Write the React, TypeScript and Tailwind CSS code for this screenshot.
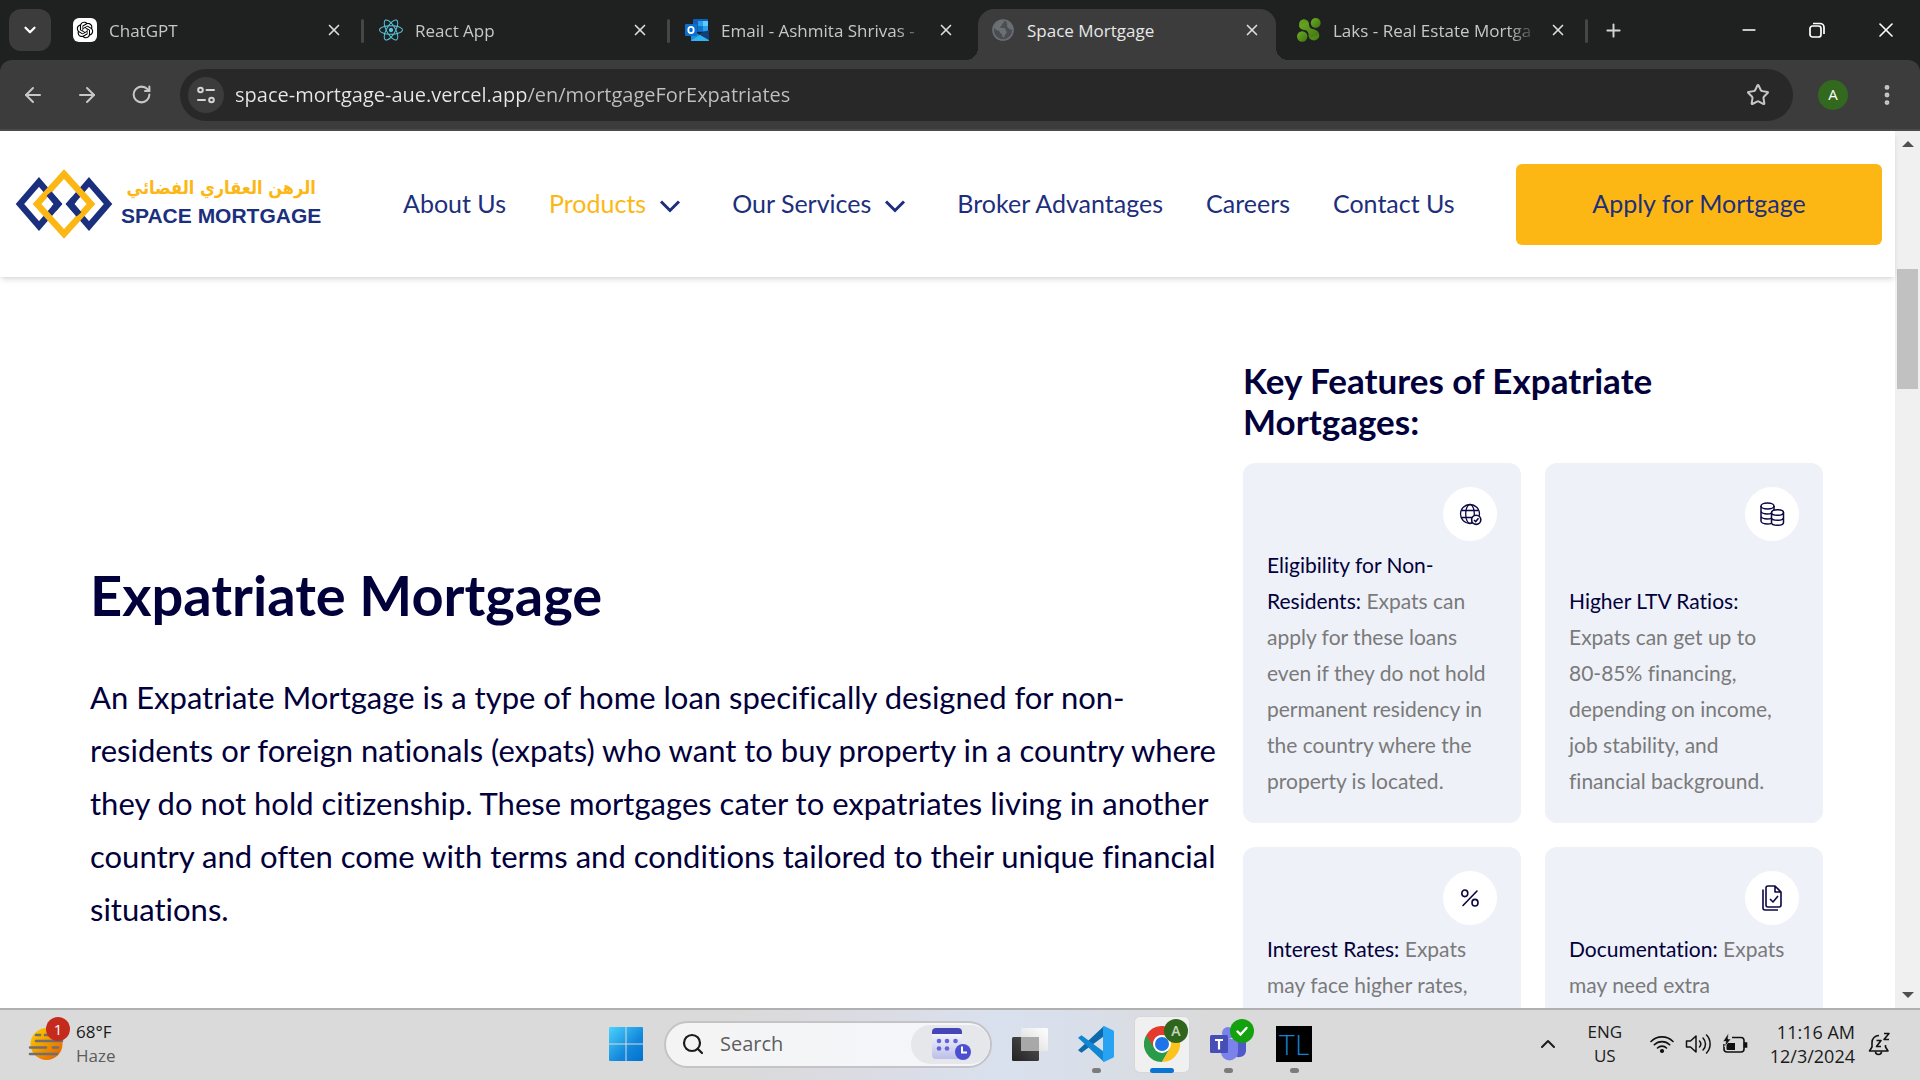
import { ReactNode } from "react";
import {
  ArrowLeft,
  ArrowRight,
  ChevronDown,
  ChevronUp,
  EllipsisVertical,
  Minus,
  Plus,
  RotateCw,
  Search,
  Star,
  X,
} from "lucide-react";
import { FaReact } from "react-icons/fa";
import { RiOpenaiFill } from "react-icons/ri";

/* ---------- Browser icons ---------- */

const ChatGptIcon = () => (
  <span className="flex size-6 items-center justify-center rounded-md bg-white text-black">
    <RiOpenaiFill size={20} />
  </span>
);

const OutlookIcon = () => (
  <svg viewBox="0 0 24 24" className="size-6" aria-hidden="true">
    <rect x="8" y="1" width="15" height="13" rx="1" fill="#0f5fb8" />
    <rect x="13" y="3" width="5" height="5" fill="#2aa0ea" />
    <rect x="18" y="3" width="5" height="5" fill="#5ccbfa" />
    <rect x="13" y="8" width="5" height="5" fill="#1172c9" />
    <rect x="18" y="8" width="5" height="5" fill="#2aa0ea" />
    <path d="M6 12l9 5 9-5v10a1 1 0 0 1-1 1H7a1 1 0 0 1-1-1z" fill="#1b8fe0" />
    <path d="M24 12v10L13 16z" fill="#123f75" />
    <path d="M6 22.500L15 17l9 5.500a1 1 0 0 1-1 .5H7a1 1 0 0 1-1-.5z" fill="#34b4f2" />
    <rect x="0" y="6" width="12" height="12" rx="1" fill="#0a6fd0" />
    <ellipse cx="6" cy="12" rx="2.700" ry="3.100" fill="none" stroke="#fff" strokeWidth="1.800" />
  </svg>
);

const GlobeTabIcon = () => (
  <svg viewBox="0 0 24 24" className="size-6" aria-hidden="true">
    <circle cx="12" cy="12" r="10" fill="#4a4e52" stroke="#6b7075" strokeWidth="1.600" />
    <path d="M3 9c2-4 5-6.500 9-6.500 1.500 1 1 2.500-.500 3-1 .5 0 2-1.500 2.500-1.500.5-1 1.500 0 2h3c1.500 0 2 1.500 1.500 3 2 0 1.500 2 0 3-1 1-.5 3-2.500 3.500-1-1.500-.5-3-2-4s-1-2.500-3-3-3.500-1.500-4-3.500z" fill="#6b7075" />
    <path d="M16 3.500c3 1.300 5 4 5.500 7.500-1.500 1-3 .5-3.500-.5s-2-1-2-2.500 1-2-.500-3z" fill="#6b7075" />
  </svg>
);

const LaksIcon = () => (
  <svg viewBox="0 0 24 24" className="size-6" aria-hidden="true">
    <defs>
      <linearGradient id="laks" x1="0" y1="0" x2="1" y2="1">
        <stop offset="0" stopColor="#6fae25" />
        <stop offset="1" stopColor="#3f7410" />
      </linearGradient>
    </defs>
    <g fill="url(#laks)">
      <ellipse cx="7" cy="6.500" rx="5" ry="5.300" />
      <circle cx="18.700" cy="5" r="4.900" />
      <circle cx="5.200" cy="18.500" r="5.200" />
      <ellipse cx="17" cy="17.500" rx="5.300" ry="5" />
      <path d="M10.500 3c2 3 1 5.500 3.500 7.500 4 1 7.500 2 8 6l-9.500 4c-1-4-.5-5.500-3-8C6 11.500 3 11 2 8z" />
    </g>
  </svg>
);

const RestoreIcon = () => (
  <svg viewBox="0 0 16 16" className="size-4" fill="none" stroke="#fff" strokeWidth="1.700" aria-hidden="true">
    <rect x="1" y="4" width="11" height="11" rx="2.500" />
    <path d="M4 1.500h7a4 4 0 0 1 4 4V12" />
  </svg>
);

const TuneIcon = () => (
  <svg viewBox="0 0 20 20" className="size-5" fill="none" stroke="#d5d5d5" strokeWidth="2" strokeLinecap="round" aria-hidden="true">
    <circle cx="4.500" cy="5" r="2.300" />
    <path d="M10.500 5H18M2 15h7" />
    <circle cx="15.500" cy="15" r="2.300" />
  </svg>
);

/* ---------- Browser window ---------- */

type TabInfo = { title: string; icon: ReactNode; active?: boolean; divider?: boolean };

const tabs: TabInfo[] = [
  { title: "ChatGPT", icon: <ChatGptIcon />, divider: true },
  { title: "React App", icon: <FaReact size={24} color="#58c4dc" />, divider: true },
  { title: "Email - Ashmita Shrivas -", icon: <OutlookIcon /> },
  { title: "Space Mortgage", icon: <GlobeTabIcon />, active: true },
  { title: "Laks - Real Estate Mortga", icon: <LaksIcon />, divider: true },
];

function Tab({ title, icon, active, divider }: TabInfo) {
  return (
    <div className="relative h-full w-[306px] shrink pt-[9px]">
      {active && (
        <>
          <span className="absolute bottom-0 left-[-10px] size-3 bg-[radial-gradient(circle_at_0_0,transparent_12px,#3c3c3c_12px)]" />
          <span className="absolute right-[-6px] bottom-0 size-3 bg-[radial-gradient(circle_at_100%_0,transparent_12px,#3c3c3c_12px)]" />
        </>
      )}
      <div className={active ? "mr-[6px] ml-[2px] flex h-full items-center rounded-t-2xl bg-[#3c3c3c] pr-[12px] pb-[9px] pl-[13px]" : "flex h-full items-center pr-[18px] pb-[9px] pl-[15px]"}>
        <button type="button" className="flex min-w-0 flex-1 items-center gap-3">
          <span className="shrink-0">{icon}</span>
          <span className={active ? "overflow-hidden pt-[2px] text-[17px] whitespace-nowrap text-[#e8e8e8]" : "overflow-hidden pt-[2px] text-[17px] whitespace-nowrap text-[#c7c7c7] [mask-image:linear-gradient(to_right,#000_175px,transparent_205px)]"}>
            {title}
          </span>
        </button>
        <button type="button" aria-label={`Close ${title}`} className="ml-2 flex size-6 items-center justify-center text-[#dcdcdc]">
          <X size={18} strokeWidth={2.2} />
        </button>
      </div>
      {divider && <span className="absolute top-[19px] right-0 h-6 w-[3px] rounded bg-[#444746]" />}
    </div>
  );
}

function Browser() {
  return (
    <div className="shrink-0 bg-[#1f2120] font-['Open_Sans',sans-serif]">
      <div className="flex h-[60px] items-center">
        <button type="button" aria-label="Search tabs" className="ml-[9px] flex size-[42px] shrink-0 items-center justify-center rounded-xl bg-[#3c3c3c] text-white">
          <ChevronDown size={18} strokeWidth={3} />
        </button>
        <div className="ml-[7px] flex h-full min-w-0 flex-1">
          {tabs.map((t) => (
            <Tab key={t.title} {...t} />
          ))}
          <button type="button" aria-label="New tab" className="ml-[13px] flex h-full w-6 items-center justify-center text-[#d5d5d5]">
            <Plus size={21} strokeWidth={2.2} />
          </button>
        </div>
        <div className="flex h-full shrink-0 text-white">
          <button type="button" aria-label="Minimize" className="flex w-[69px] items-center justify-center"><Minus size={20} /></button>
          <button type="button" aria-label="Restore" className="flex w-[68px] items-center justify-center"><RestoreIcon /></button>
          <button type="button" aria-label="Close" className="flex w-[69px] items-center justify-center"><X size={24} strokeWidth={1.6} /></button>
        </div>
      </div>
      <div className="flex h-[71px] items-center rounded-t-xl border-b-2 border-[#4a4a4a] bg-[#3c3c3c] text-[#c7c7c7]">
        <button type="button" aria-label="Back" className="ml-[6px] flex w-[54px] justify-center"><ArrowLeft size={24} /></button>
        <button type="button" aria-label="Forward" className="flex w-[54px] justify-center"><ArrowRight size={24} /></button>
        <button type="button" aria-label="Reload" className="flex w-[54px] justify-center"><RotateCw size={21} strokeWidth={2.3} /></button>
        <div className="ml-3 flex h-[52px] flex-1 items-center rounded-full bg-[#282828] pr-[23px] pl-2">
          <button type="button" aria-label="View site information" className="flex size-9 items-center justify-center rounded-full bg-[#3c3c3c]">
            <TuneIcon />
          </button>
          <input
            type="text"
            aria-label="Address"
            defaultValue="space-mortgage-aue.vercel.app/en/mortgageForExpatriates"
            className="ml-[11px] flex-1 bg-[linear-gradient(to_right,#e8e8e8_293px,#c0c0c0_293px)] bg-clip-text text-[20px] text-transparent outline-none"
          />
          <button type="button" aria-label="Bookmark this tab"><Star size={24} /></button>
        </div>
        <button type="button" aria-label="Profile" className="ml-[25px] flex size-[30px] items-center justify-center rounded-full bg-[#33691e] text-[15px] text-white">A</button>
        <button type="button" aria-label="Browser menu" className="mr-[20px] ml-[26px]"><EllipsisVertical size={26} strokeWidth={2.5} /></button>
      </div>
    </div>
  );
}

/* ---------- Site ---------- */

function Logo() {
  return (
    <a href="#home" className="ml-[15px] flex w-[310px] shrink-0 items-center gap-2">
      <svg viewBox="0 0 98 72" className="h-[72px] w-[98px] shrink-0" fill="none" strokeWidth="6.500" aria-hidden="true">
        <path d="M24 14L43 36 24 58 5 36z" stroke="#1a2f7e" />
        <path d="M74 14L93 36 74 58 55 36z" stroke="#1a2f7e" />
        <path d="M49 6L76 36 49 66 22 36z" stroke="#fdb714" />
        <path d="M34 25.600L43 36 39 40.600" stroke="#1a2f7e" />
        <path d="M59 31.400L55 36 64 46.400" stroke="#1a2f7e" />
      </svg>
      <span className="flex flex-col items-center pb-2 whitespace-nowrap">
        <span lang="ar" dir="rtl" className="font-['DejaVu_Sans_Condensed','DejaVu_Sans',sans-serif] text-[18px] leading-8 font-bold text-[#fdb714]">الرهن العقاري الفضائي</span>
        <span className="font-['Liberation_Sans',Arial,sans-serif] text-[21px] leading-6 font-bold text-[#1a2f7e]">SPACE MORTGAGE</span>
      </span>
    </a>
  );
}

const links = [
  { label: "About Us" },
  { label: "Products", menu: true, current: true },
  { label: "Our Services", menu: true },
  { label: "Broker Advantages" },
  { label: "Careers" },
  { label: "Contact Us" },
];

function SiteHeader() {
  return (
    <header className="relative flex h-[146px] shrink-0 items-center bg-white shadow-md shadow-black/10">
      <Logo />
      <nav className="ml-[78px] flex gap-[43px] text-[25px] whitespace-nowrap text-[#1d2f7c]">
        {links.map((l) => (
          <a key={l.label} href="#nav" className={l.menu ? "flex items-center gap-3 pr-[7px]" : "flex items-center"}>
            <span className={l.current ? "text-[#fdb714]" : ""}>{l.label}</span>
            {l.menu && (
              <svg viewBox="0 0 24 24" className="mt-1 size-6" fill="none" stroke="#1d2f7c" strokeWidth="3" aria-hidden="true">
                <path d="M3 7.500l9 9 9-9" />
              </svg>
            )}
          </a>
        ))}
      </nav>
      <a href="#apply" className="mr-[13px] ml-auto flex h-[81px] w-[366px] items-center justify-center rounded-md bg-[#fdb714] text-[25px] text-[#1d2f7c]">
        Apply for Mortgage
      </a>
    </header>
  );
}

const GlobeCheck = () => (
  <svg viewBox="0 0 24 24" className="size-6" fill="none" stroke="#0b0741" strokeWidth="1.300" aria-hidden="true">
    <circle cx="12" cy="12" r="9.500" />
    <ellipse cx="12" cy="12" rx="4.300" ry="9.500" />
    <path d="M3.500 8.500h17M3.500 15.500H15" />
    <circle cx="18.200" cy="17.800" r="4.600" fill="#fff" strokeWidth="1.600" />
    <path d="M16 18l1.700 1.600 2.800-3.400" strokeWidth="1.500" />
  </svg>
);

const Coins = () => (
  <svg viewBox="0 0 26 26" className="size-[26px]" fill="none" stroke="#0b0741" strokeWidth="1.500" aria-hidden="true">
    <ellipse cx="8.500" cy="5" rx="6.500" ry="3" />
    <path d="M2 5v15c0 1.700 3 3 6.500 3 1.600 0 3-.2 4-.7M15 5v4M2 10c0 1.700 3 3 6.500 3 1.500 0 2.800-.2 3.800-.6M2 15c0 1.700 3 3 6.500 3 1.500 0 2.800-.2 3.800-.6" />
    <ellipse cx="18.500" cy="11.500" rx="6" ry="2.800" />
    <path d="M12.500 11.500v10c0 1.600 2.700 2.800 6 2.800s6-1.200 6-2.800v-10M12.500 16.500c0 1.600 2.700 2.800 6 2.800s6-1.200 6-2.800" />
  </svg>
);

const Percent = () => (
  <svg viewBox="0 0 20 20" className="size-5" fill="none" stroke="#0b0741" strokeWidth="1.600" strokeLinecap="round" aria-hidden="true">
    <ellipse cx="4.800" cy="5.300" rx="3" ry="3.300" />
    <ellipse cx="15" cy="14.700" rx="3" ry="3.300" />
    <path d="M17 3L3 17.500" />
  </svg>
);

const DocCheck = () => (
  <svg viewBox="0 0 26 26" className="size-[26px]" fill="none" stroke="#0b0741" strokeWidth="1.600" strokeLinejoin="round" aria-hidden="true">
    <path d="M9 1h7l6 6v13a2 2 0 0 1-2 2H9a2 2 0 0 1-2-2V3a2 2 0 0 1 2-2zM16 1v6h6" />
    <path d="M4 4.500V23a2 2 0 0 0 2 2h13" />
    <path d="M11 14l3 3 5-6" />
  </svg>
);

const features: { title: string; text: ReactNode; icon: ReactNode }[] = [
  { title: "Eligibility for Non-Residents:", text: "Expats can apply for these loans even if they do not hold permanent residency in the country where the property is located.", icon: <GlobeCheck /> },
  {
    title: "Higher LTV Ratios:",
    text: <>Expats can get up to <span className="whitespace-nowrap">80-85%</span> financing, depending on income, job stability, and financial background.</>,
    icon: <Coins />,
  },
  { title: "Interest Rates:", text: "Expats may face higher rates,", icon: <Percent /> },
  { title: "Documentation:", text: "Expats may need extra", icon: <DocCheck /> },
];

function SiteContent() {
  return (
    <main className="grid min-h-0 flex-1 grid-cols-[minmax(0,1fr)_580px] gap-6 overflow-hidden pt-[83px] pr-[72px] pl-[90px] text-[#02003b]">
      <section className="pt-[200px]">
        <h1 className="text-[56px] leading-[70px] font-bold">Expatriate Mortgage</h1>
        <p className="mt-[41px] text-[31px] leading-[53px]">
          An Expatriate Mortgage is a type of home loan specifically designed for non-residents or foreign nationals (expats) who want to buy property in a country where they do not hold citizenship. These mortgages cater to expatriates living in another country and often come with terms and conditions tailored to their unique financial situations.
        </p>
      </section>
      <section>
        <h2 className="w-[440px] text-[35px] leading-[41px] font-bold">Key Features of Expatriate Mortgages:</h2>
        <div className="mt-[21px] grid grid-cols-2 gap-6">
          {features.map((f) => (
            <article key={f.title} className="flex flex-col justify-between gap-[6px] rounded-xl bg-[#eef1f8] p-6">
              <span className="flex size-[54px] items-center justify-center self-end rounded-full bg-white">{f.icon}</span>
              <p className="text-[21px] leading-9 text-[#7a7a7a]">
                <span className="text-[#02003b]">{f.title}</span> {f.text}
              </p>
            </article>
          ))}
        </div>
      </section>
    </main>
  );
}

function Scrollbar() {
  return (
    <div aria-hidden="true" className="flex w-[25px] shrink-0 flex-col items-center bg-[#f0f0f0] py-[10px]">
      <span className="size-0 border-x-6 border-b-6 border-x-transparent border-b-[#505050]" />
      <span className="mt-[122px] h-[120px] w-[21px] bg-[#c1c1c1]" />
      <span className="mt-auto size-0 border-x-6 border-t-6 border-x-transparent border-t-[#505050]" />
    </div>
  );
}

/* ---------- Taskbar ---------- */

const HazeIcon = () => (
  <svg viewBox="0 0 36 34" className="h-[34px] w-9" aria-hidden="true">
    <defs>
      <linearGradient id="sun" x1="0" y1="0" x2="1" y2="1">
        <stop offset="0" stopColor="#ffd200" />
        <stop offset="1" stopColor="#e25a00" />
      </linearGradient>
    </defs>
    <circle cx="18.500" cy="17" r="16" fill="url(#sun)" />
    <path d="M8 8h4M17 8h6M8 14h26M2 20.500h16M25 20.500h5M2 27h27" stroke="#6f6f6f" strokeWidth="2.600" strokeLinecap="round" />
  </svg>
);

const WindowsIcon = () => (
  <svg viewBox="0 0 36 36" className="size-9" aria-hidden="true">
    <defs>
      <linearGradient id="win" gradientUnits="userSpaceOnUse" x1="0" y1="0" x2="36" y2="36">
        <stop offset="0" stopColor="#4fd6ff" />
        <stop offset="0.600" stopColor="#1288dc" />
        <stop offset="1" stopColor="#006fcf" />
      </linearGradient>
    </defs>
    <path d="M1 2a1 1 0 0 1 1-1h15.500v16.500H1zM18.500 1H34a1 1 0 0 1 1 1v15.500H18.500zM1 18.500h16.500V35H2a1 1 0 0 1-1-1zM18.500 18.500H35V34a1 1 0 0 1-1 1H18.500z" fill="url(#win)" />
  </svg>
);

const CalendarIcon = () => (
  <svg viewBox="0 0 40 34" className="h-[34px] w-10" aria-hidden="true">
    <defs>
      <linearGradient id="cal" x1="0" y1="0" x2="0" y2="1">
        <stop offset="0" stopColor="#fff" />
        <stop offset="1" stopColor="#bcbfe8" />
      </linearGradient>
    </defs>
    <rect x="1" y="1" width="30" height="31" rx="4" fill="url(#cal)" />
    <path d="M1 7V5a4 4 0 0 1 4-4h22a4 4 0 0 1 4 4v2z" fill="#4547b8" />
    <g fill="#6264da">
      <circle cx="8" cy="14" r="2.300" /><circle cx="16" cy="14" r="2.300" /><circle cx="24.500" cy="14" r="2.300" />
      <circle cx="8" cy="21.500" r="2.300" /><circle cx="16" cy="21.500" r="2.300" />
    </g>
    <circle cx="32" cy="25" r="8" fill="#4c50cf" />
    <path d="M31 19.500v6h5" fill="none" stroke="#fff" strokeWidth="2" />
  </svg>
);

const TaskViewIcon = () => (
  <svg viewBox="0 0 36 36" className="size-9" aria-hidden="true">
    <defs>
      <linearGradient id="tvd" x1="1" y1="0" x2="0" y2="1"><stop offset="0" stopColor="#555" /><stop offset="1" stopColor="#222" /></linearGradient>
      <linearGradient id="tvl" x1="1" y1="0" x2="0" y2="1"><stop offset="0" stopColor="#fff" /><stop offset="1" stopColor="#d8d8d8" /></linearGradient>
    </defs>
    <rect x="0" y="11" width="27" height="24" rx="1.500" fill="url(#tvd)" />
    <rect x="9" y="2" width="27" height="23" rx="1.500" fill="url(#tvl)" />
    <path d="M9 11h18v14H10.500A1.500 1.500 0 0 1 9 23.500z" fill="#a8a8a8" />
  </svg>
);

const VsCodeIcon = () => (
  <svg viewBox="0 0 36 36" className="size-9" aria-hidden="true">
    <path d="M0 24.200L26 0l1.500 9L3.500 26.800z" fill="#0b69ac" />
    <path d="M0 11.800l3.500-2.600L27.500 27 26 36z" fill="#1187d3" />
    <path d="M26 0l9 4.200a2 2 0 0 1 1 1.800v24a2 2 0 0 1-1 1.800L26 36c-.8-.2-1-1-1-2V2c0-1 .2-1.800 1-2z" fill="#27a3f1" />
  </svg>
);

const ChromeIcon = () => (
  <svg viewBox="0 0 36 36" className="size-9" aria-hidden="true">
    <path d="M18 18L2.400 9A18 18 0 0 0 18 36l7.800-13.500z" fill="#2a9b48" />
    <path d="M18 9h15.600A18 18 0 0 1 18 36l7.800-13.500z" fill="#fcc31e" />
    <path d="M2.400 9A18 18 0 0 1 33.600 9H18a9 9 0 0 0-7.800 13.500z" fill="#e33b2e" />
    <circle cx="18" cy="18" r="9" fill="#fff" />
    <circle cx="18" cy="18" r="7" fill="#1e73e8" />
  </svg>
);

const TeamsIcon = () => (
  <svg viewBox="0 0 36 36" className="size-9" aria-hidden="true">
    <circle cx="18" cy="7" r="6" fill="#7b83eb" />
    <path d="M24 13h12v12a7 7 0 0 1-12 4z" fill="#5059c9" />
    <path d="M11 13h17v13a8.500 8.500 0 0 1-17 0z" fill="#7b83eb" />
    <rect x="0" y="9" width="18" height="18" rx="1.500" fill="#464eb8" />
    <path d="M5 14h8M9 14v9.500" stroke="#fff" strokeWidth="2.200" />
  </svg>
);

const WifiIcon = () => (
  <svg viewBox="0 0 24 20" className="h-5 w-6" fill="none" stroke="#111" strokeWidth="1.600" strokeLinecap="round" aria-hidden="true">
    <path d="M1 7.500a15.500 15.500 0 0 1 22 0M4.300 10.800a10.900 10.900 0 0 1 15.400 0M7.500 14a6.400 6.400 0 0 1 9 0" />
    <circle cx="12" cy="17" r="1.300" fill="#111" />
  </svg>
);

const SpeakerIcon = () => (
  <svg viewBox="0 0 26 22" className="h-[22px] w-[26px]" fill="none" stroke="#111" strokeWidth="1.500" strokeLinejoin="round" strokeLinecap="round" aria-hidden="true">
    <path d="M1.500 8v6h4l5.500 5V3L5.500 8z" />
    <path d="M14.500 8a4.500 4.500 0 0 1 0 6M18 5a8.500 8.500 0 0 1 0 12M21.500 2a13 13 0 0 1 0 18" />
  </svg>
);

const BatteryIcon = () => (
  <svg viewBox="0 0 26 22" className="h-[22px] w-[26px]" fill="none" stroke="#111" strokeWidth="1.600" aria-hidden="true">
    <path d="M10 4.500h9a3 3 0 0 1 3 3V16a3 3 0 0 1-3 3H5a3 3 0 0 1-3-3v-5" />
    <path d="M22.500 10h2v4h-2z" fill="#111" />
    <path d="M4.500 10h8.500v7H5.500a1 1 0 0 1-1-1z" fill="#111" stroke="none" />
    <path d="M6.500 0L1 8.500h3L2.500 14 9 6H6z" fill="#111" stroke="#dadada" strokeWidth="0.600" />
  </svg>
);

const BellIcon = () => (
  <svg viewBox="0 0 24 24" className="size-6" fill="none" stroke="#111" strokeWidth="1.600" strokeLinejoin="round" aria-hidden="true">
    <path d="M12 3.500c-4 0-7 3-7 7V15l-2.500 4h18.500L18.500 15v-2" />
    <path d="M8.500 19.500c0 4 6 4 6 0" />
    <path d="M9.500 8.500H14l-4.500 6H14M17 1.500h5l-5 6h5" />
  </svg>
);

function TaskButton({ label, children, state }: { label: string; children: ReactNode; state?: "open" | "focused" }) {
  return (
    <button type="button" aria-label={label} className="relative flex h-full w-[66px] items-center justify-center">
      {state === "focused" && <span className="absolute inset-x-[5px] top-[6px] bottom-[5px] rounded-md border border-black/10 bg-[#f0f0f0]" />}
      <span className="relative">{children}</span>
      {state === "open" && <span className="absolute bottom-[5px] h-[5px] w-[9px] rounded-full bg-[#7c7c7c]" />}
      {state === "focused" && <span className="absolute bottom-[5px] h-[5px] w-6 rounded-full bg-[#0b74d1]" />}
    </button>
  );
}

function Taskbar() {
  return (
    <footer className="grid h-[72px] shrink-0 grid-cols-[1fr_auto_1fr] items-center border-t-2 border-[#b0b0b0] bg-[#dadada] bg-[linear-gradient(to_right,#dadada_38%,#dbdbe3_45%,#d9e1ee_52%,#d9dfea_56%,#dadada_63%)] pb-[2px] font-['Open_Sans',sans-serif] text-[17px] leading-6 text-[#1b1b1b]">
      <button type="button" className="ml-7 flex items-center gap-3 justify-self-start text-left">
        <span className="relative">
          <HazeIcon />
          <span className="absolute top-[-10px] right-[-6px] flex size-6 items-center justify-center rounded-full bg-[#c42b1c] text-[15px] text-white">1</span>
        </span>
        <span>
          <span className="block">68°F</span>
          <span className="block text-[#5c5c5c]">Haze</span>
        </span>
      </button>
      <div className="flex h-full items-center">
        <TaskButton label="Start"><WindowsIcon /></TaskButton>
        <div className="mx-[5px] flex h-[47px] w-[328px] items-center rounded-full border-2 border-[#c3c3c8] bg-[linear-gradient(to_right,#f4f4f4,#f4f6fb)] pl-[15px]">
          <Search size={24} strokeWidth={2.2} />
          <input type="text" aria-label="Search" placeholder="Search" className="ml-[15px] w-0 flex-1 text-[20px] outline-none placeholder:text-[#5e5e5e]" />
          <span className="flex h-[39px] w-[79px] items-center justify-center rounded-full bg-[#e5e7ea]"><CalendarIcon /></span>
        </div>
        <TaskButton label="Task view"><TaskViewIcon /></TaskButton>
        <TaskButton label="Visual Studio Code" state="open"><VsCodeIcon /></TaskButton>
        <TaskButton label="Google Chrome" state="focused">
          <ChromeIcon />
          <span className="absolute top-[-7px] right-[-8px] flex size-6 items-center justify-center rounded-full bg-[#2f661d] text-[14px] font-semibold text-[#c5d8bf]">A</span>
        </TaskButton>
        <TaskButton label="Microsoft Teams" state="open">
          <TeamsIcon />
          <span className="absolute top-[-7px] right-[-8px] flex size-6 items-center justify-center rounded-full bg-[#13a10e]">
            <svg viewBox="0 0 14 14" className="size-[14px]" fill="none" stroke="#fff" strokeWidth="2.400" strokeLinecap="round" aria-hidden="true"><path d="M2.500 7.500l3 3 6-6.500" /></svg>
          </span>
        </TaskButton>
        <TaskButton label="TL" state="open">
          <span className="flex size-9 items-center justify-center bg-black font-['Lato',sans-serif] text-[28px] font-light text-[#1283d6]">TL</span>
        </TaskButton>
      </div>
      <div className="mr-[29px] flex items-center justify-self-end">
        <button type="button" aria-label="Show hidden icons"><ChevronUp size={24} /></button>
        <button type="button" className="ml-[25px] w-10 text-center">ENG<br />US</button>
        <button type="button" aria-label="Network, sound and battery" className="ml-[25px] flex items-center gap-[11px]">
          <WifiIcon />
          <SpeakerIcon />
          <BatteryIcon />
        </button>
        <button type="button" className="ml-[22px] text-right text-[18px] whitespace-nowrap">11:16 AM<br />12/3/2024</button>
        <button type="button" aria-label="Notifications" className="ml-3"><BellIcon /></button>
      </div>
    </footer>
  );
}

export default function App() {
  return (
    <div className="flex h-screen flex-col overflow-hidden bg-white">
      <Browser />
      <div className="flex min-h-0 flex-1">
        <div className="flex min-w-0 flex-1 flex-col font-['Lato',sans-serif] [font-variant-ligatures:none]">
          <SiteHeader />
          <SiteContent />
        </div>
        <Scrollbar />
      </div>
      <Taskbar />
    </div>
  );
}
